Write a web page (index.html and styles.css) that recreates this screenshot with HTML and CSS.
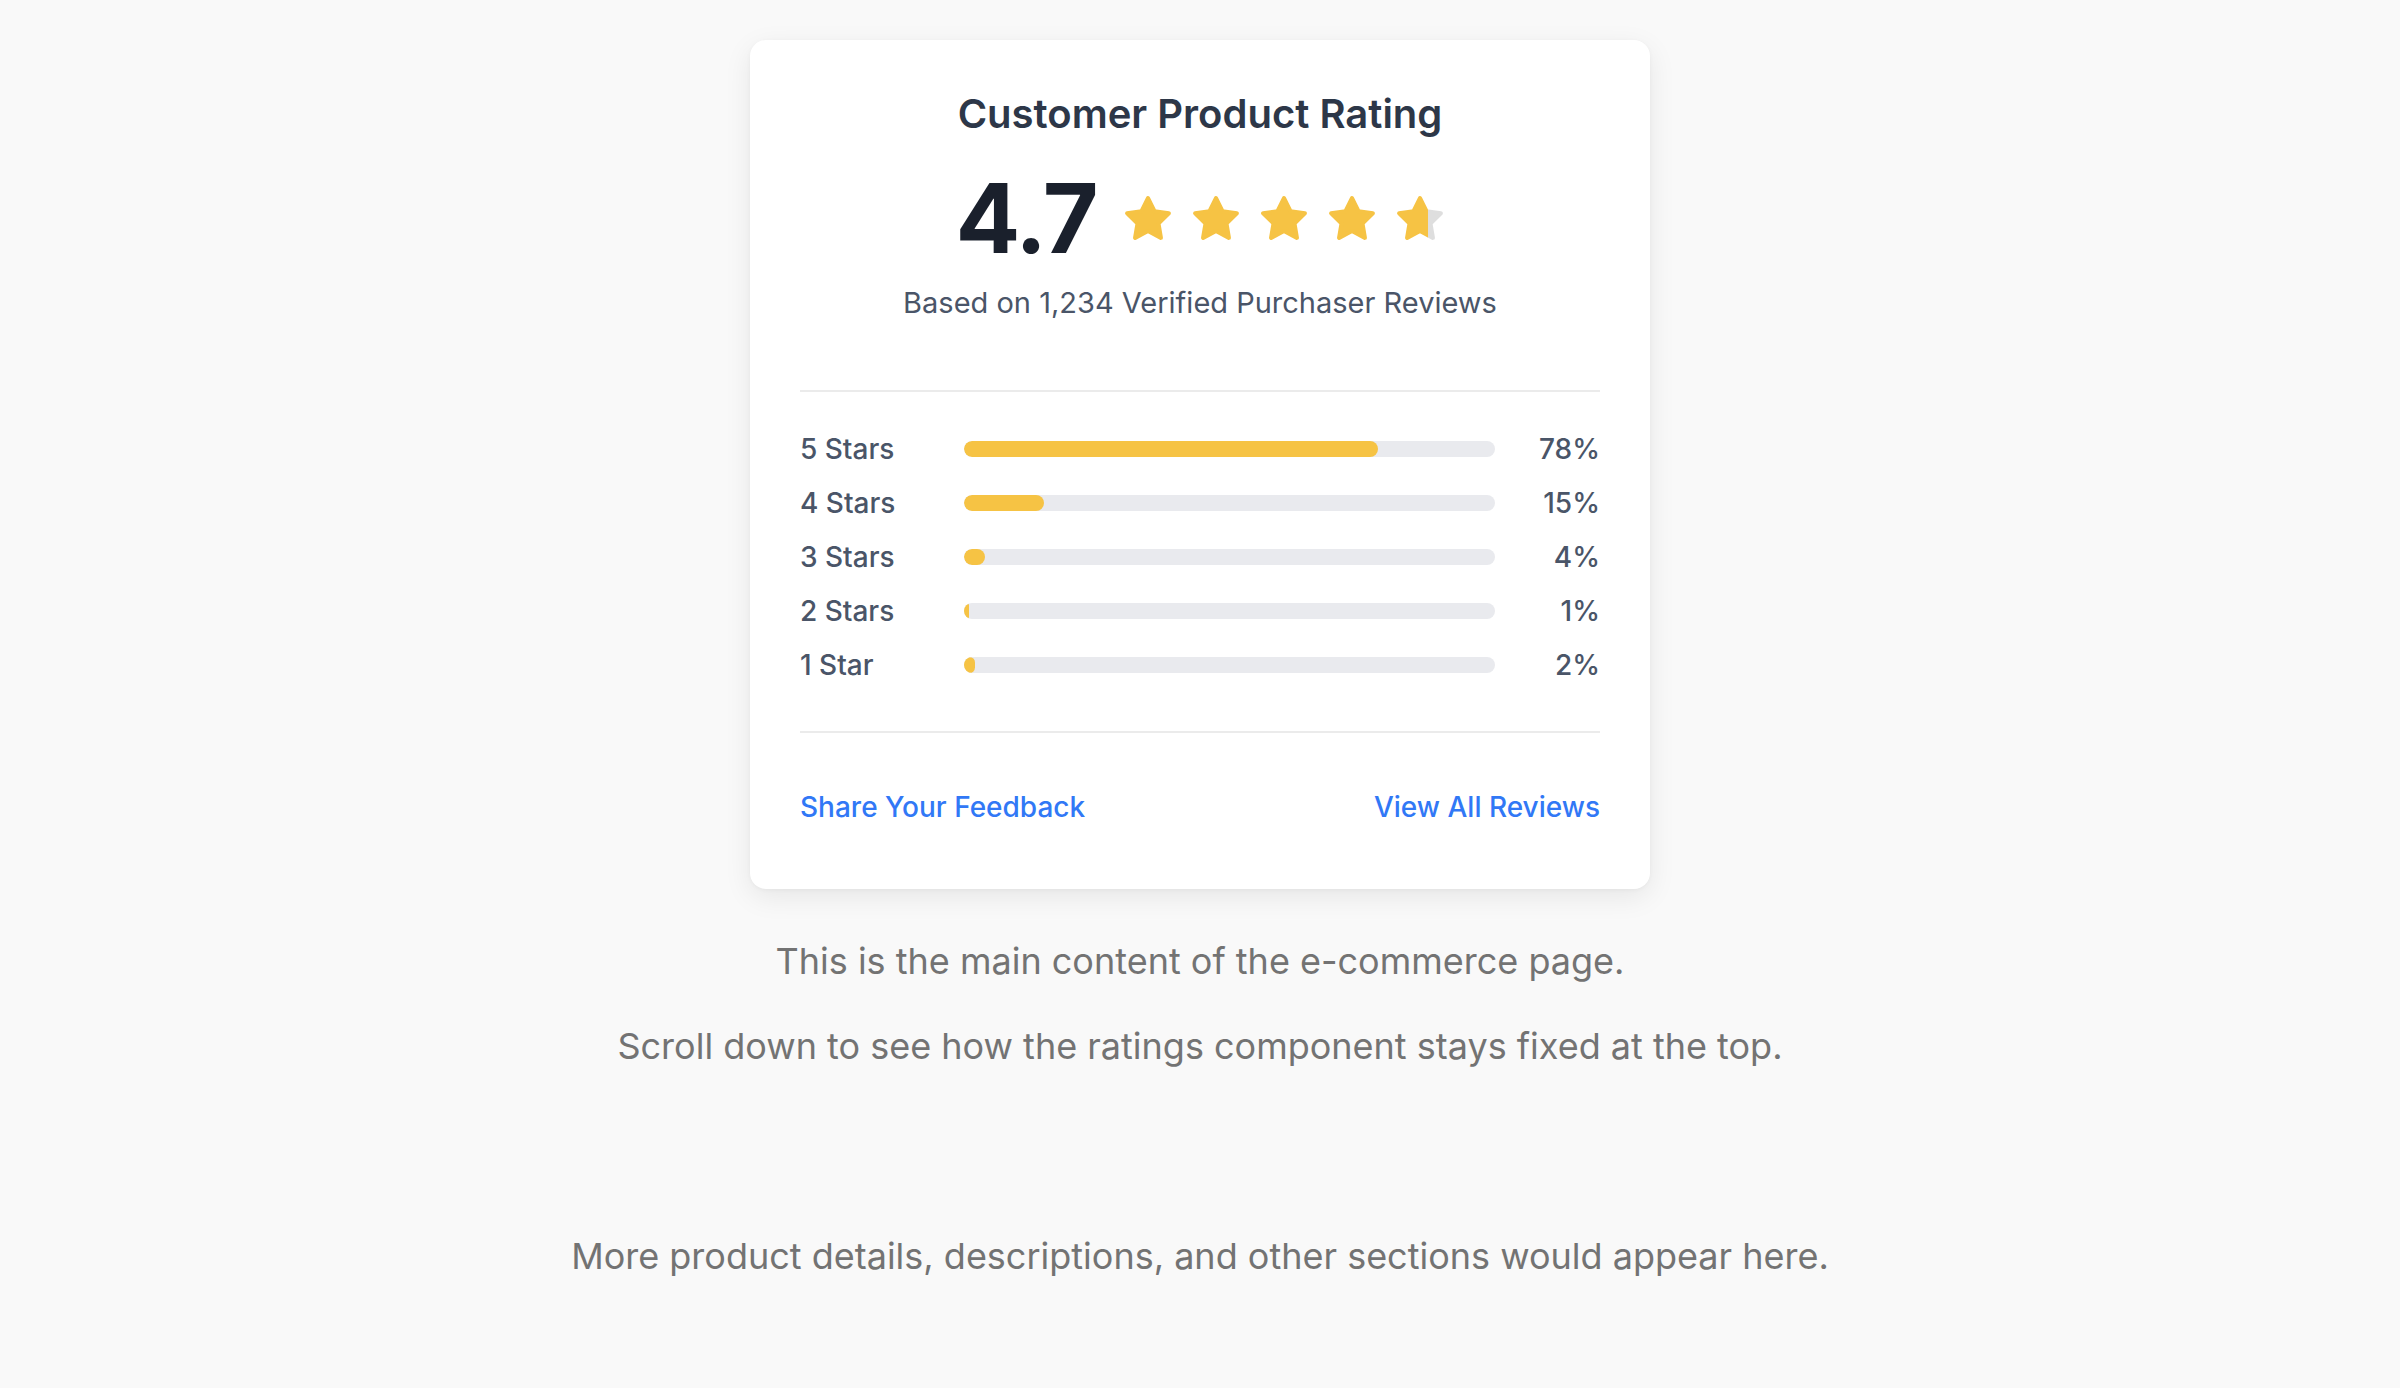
FILE: index.html
```html
<!DOCTYPE html>
<html lang="en">
<head>
<meta charset="utf-8">
<title>Customer Product Rating</title>
<link rel="stylesheet" href="styles.css">
</head>
<body>
<div class="page">
  <section class="rating-card">
    <h2 class="rating-title">Customer Product Rating</h2>
    <div class="rating-summary">
      <span class="rating-score">4.7</span>
      <div class="stars">
        <svg class="star" viewBox="0 0 24 24"><polygon points="12 2 15.09 8.26 22 9.27 17 14.14 18.18 21.02 12 17.77 5.82 21.02 7 14.14 2 9.27 8.91 8.26 12 2"/></svg>
        <svg class="star" viewBox="0 0 24 24"><polygon points="12 2 15.09 8.26 22 9.27 17 14.14 18.18 21.02 12 17.77 5.82 21.02 7 14.14 2 9.27 8.91 8.26 12 2"/></svg>
        <svg class="star" viewBox="0 0 24 24"><polygon points="12 2 15.09 8.26 22 9.27 17 14.14 18.18 21.02 12 17.77 5.82 21.02 7 14.14 2 9.27 8.91 8.26 12 2"/></svg>
        <svg class="star" viewBox="0 0 24 24"><polygon points="12 2 15.09 8.26 22 9.27 17 14.14 18.18 21.02 12 17.77 5.82 21.02 7 14.14 2 9.27 8.91 8.26 12 2"/></svg>
        <svg class="star star-partial" viewBox="0 0 24 24">
          <defs>
            <linearGradient id="partial" x1="0" y1="0" x2="1" y2="0">
              <stop offset="0.7" stop-color="#f6c344"/>
              <stop offset="0.7" stop-color="#dedede"/>
            </linearGradient>
          </defs>
          <polygon points="12 2 15.09 8.26 22 9.27 17 14.14 18.18 21.02 12 17.77 5.82 21.02 7 14.14 2 9.27 8.91 8.26 12 2"/>
        </svg>
      </div>
    </div>
    <p class="rating-count">Based on 1,234 Verified Purchaser Reviews</p>

    <div class="breakdown">
      <div class="breakdown-row">
        <span class="row-label">5 Stars</span>
        <div class="bar"><div class="bar-fill" style="width:78%"></div></div>
        <span class="row-pct">78%</span>
      </div>
      <div class="breakdown-row">
        <span class="row-label">4 Stars</span>
        <div class="bar"><div class="bar-fill" style="width:15%"></div></div>
        <span class="row-pct">15%</span>
      </div>
      <div class="breakdown-row">
        <span class="row-label">3 Stars</span>
        <div class="bar"><div class="bar-fill" style="width:4%"></div></div>
        <span class="row-pct">4%</span>
      </div>
      <div class="breakdown-row">
        <span class="row-label">2 Stars</span>
        <div class="bar"><div class="bar-fill" style="width:1%"></div></div>
        <span class="row-pct">1%</span>
      </div>
      <div class="breakdown-row">
        <span class="row-label">1 Star</span>
        <div class="bar"><div class="bar-fill" style="width:2%"></div></div>
        <span class="row-pct">2%</span>
      </div>
    </div>

    <div class="card-actions">
      <a class="action-link" href="#">Share Your Feedback</a>
      <a class="action-link" href="#">View All Reviews</a>
    </div>
  </section>

  <main class="main-content">
    <p class="content-text">This is the main content of the e-commerce page.</p>
    <p class="content-text">Scroll down to see how the ratings component stays fixed at the top.</p>
    <p class="content-text content-more">More product details, descriptions, and other sections would appear here.</p>
  </main>
</div>
</body>
</html>
```

FILE: styles.css
```css
* {
  box-sizing: border-box;
}

html, body {
  margin: 0;
  padding: 0;
}

body {
  background: #f9f9f9;
  font-family: Inter, "Noto Sans", "Liberation Sans", sans-serif;
  color: #4a5568;
}

.page {
  display: flex;
  flex-direction: column;
  align-items: center;
  padding-top: 40px;
}

.rating-card {
  width: 900px;
  background: #ffffff;
  border-radius: 16px;
  box-shadow: 0 8px 28px rgba(0, 0, 0, 0.08), 0 1px 4px rgba(0, 0, 0, 0.04);
  padding: 50px 50px 62px;
  display: flex;
  flex-direction: column;
}

.rating-title {
  margin: 0;
  text-align: center;
  font-size: 40px;
  line-height: 48px;
  font-weight: 600;
  color: #2d3748;
}

.rating-summary {
  margin-top: 32px;
  display: flex;
  align-items: center;
  justify-content: center;
  gap: 26px;
}

.rating-score {
  font-size: 96px;
  line-height: 96px;
  font-weight: 700;
  color: #1a202c;
  letter-spacing: -2px;
}

.stars {
  display: flex;
  gap: 18px;
  padding-top: 2px;
}

.star {
  width: 50px;
  height: 50px;
  display: block;
}

.star polygon {
  fill: #f6c344;
  stroke: #f6c344;
  stroke-width: 2;
  stroke-linejoin: round;
}

.star-partial polygon {
  fill: url(#partial);
  stroke: url(#partial);
}

.rating-count {
  margin: 17px 0 0;
  text-align: center;
  font-size: 29px;
  line-height: 40px;
  color: #4a5568;
}

.breakdown {
  margin-top: 67px;
  border-top: 2px solid #ebebeb;
  border-bottom: 2px solid #ebebeb;
  padding: 37px 0 46px;
  display: flex;
  flex-direction: column;
  gap: 14px;
}

.breakdown-row {
  display: grid;
  grid-template-columns: 140px 1fr 81px;
  column-gap: 24px;
  align-items: center;
  font-size: 28px;
  line-height: 40px;
  font-weight: 500;
  color: #4a5568;
}

.row-pct {
  text-align: right;
}

.bar {
  height: 16px;
  border-radius: 8px;
  background: #e9eaee;
  overflow: hidden;
}

.bar-fill {
  height: 100%;
  border-radius: 8px;
  background: #f6c344;
}

.card-actions {
  margin-top: 54px;
  display: flex;
  justify-content: space-between;
  font-size: 28px;
  line-height: 40px;
}

.action-link {
  color: #3178f6;
  text-decoration: none;
  font-weight: 500;
}

.main-content {
  margin-top: 47px;
  display: flex;
  flex-direction: column;
  align-items: center;
}

.content-text {
  margin: 0 0 35px;
  font-size: 36px;
  line-height: 50px;
  color: #737373;
  text-align: center;
}

.content-more {
  margin-top: 125px;
}
```
